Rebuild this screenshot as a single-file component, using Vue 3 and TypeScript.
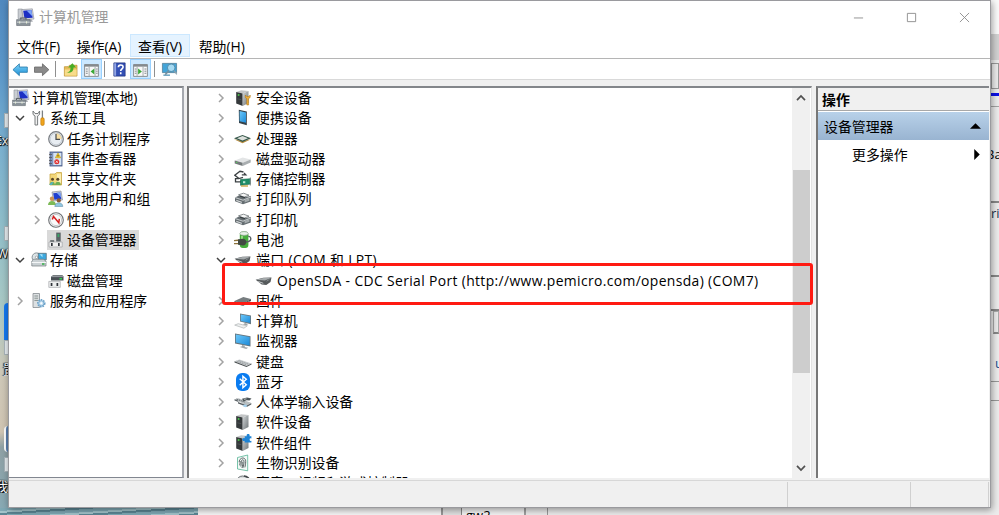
<template>
  <div class="desktop">
    <!-- 图标定义 -->
    <svg class="icon-defs" width="0" height="0" aria-hidden="true">
      <defs>
        <linearGradient id="g-screen" x1="0" y1="0" x2="1" y2="1">
          <stop offset="0" stop-color="#6cc8fa" />
          <stop offset="1" stop-color="#1c8ad8" />
        </linearGradient>
        <linearGradient id="g-metal" x1="0" y1="0" x2="1" y2="1">
          <stop offset="0" stop-color="#d0d4d6" />
          <stop offset="1" stop-color="#6f7578" />
        </linearGradient>
        <linearGradient id="g-arrow" x1="0" y1="0" x2="0" y2="1">
          <stop offset="0" stop-color="#7fd4f8" />
          <stop offset="1" stop-color="#1d8fd6" />
        </linearGradient>
      </defs>

      <symbol id="i-manage" viewBox="0 0 18 18">
        <path d="M2 1h4v9H2z" fill="#c9cdd2" stroke="#8a9097" stroke-width=".6" />
        <path d="M5.5 1.5 15.5.8 17 10.5 7 11z" fill="#d7d9de" stroke="#8b8f9a" stroke-width=".6" />
        <path d="M6.8 2.5 14.6 2 15.8 9.3 8 9.8z" fill="#1c2fc4" />
        <path d="M10 2.3 14.6 2l1 6z" fill="#7fa5f5" />
        <path d="M10 11h5l1 2h-6z" fill="#a8abb2" />
        <path d="M.6 11h12.8v5.6H.6z" fill="#8a9399" stroke="#666e74" stroke-width=".6" />
        <path d="M4.5 11V9.4h5V11" fill="none" stroke="#555d63" />
        <path d="M1 13.4h12" stroke="#d5dadd" />
        <path d="M3.5 12.6v2M10 12.6v2" stroke="#e9f0d8" />
      </symbol>
      <symbol id="i-tools" viewBox="0 0 18 18">
        <path d="M3 2v3.4l2 1.6V16h2.6V7l2-1.6V2L8 4.5H5z" fill="#f0f0f0" stroke="#6c7073" stroke-width=".9" />
        <path d="M12.4 1.5v8" stroke="#7b8084" stroke-width="1.3" />
        <rect x="10.8" y="8.8" width="3.4" height="7.6" rx="1.3" fill="#f0a51c" stroke="#b97408" stroke-width=".6" />
      </symbol>
      <symbol id="i-clock" viewBox="0 0 18 18">
        <circle cx="9" cy="9" r="7.3" fill="#e8edf2" stroke="#777b80" stroke-width="1.2" />
        <path d="M9 9V3a6 6 0 0 1 6 6z" fill="#f8dfa4" />
        <circle cx="9" cy="9" r="5.8" fill="none" stroke="#b2bac2" stroke-width=".6" />
        <path d="M9 4v5.3h4" fill="none" stroke="#45494d" stroke-width="1.2" />
      </symbol>
      <symbol id="i-event" viewBox="0 0 18 18">
        <rect x="3" y="2" width="12" height="14" fill="#7f95bf" stroke="#43547f" stroke-width=".8" />
        <rect x="6.3" y="3" width="8" height="12" fill="#d7e4f4" />
        <path d="M2 4.5h3M2 7.5h3M2 10.5h3M2 13.5h3" stroke="#555" stroke-width=".8" />
        <path d="m11 3 2.7 4.8H8.3z" fill="#ffd229" stroke="#b18b00" stroke-width=".5" />
        <path d="M11 4.8v1.8" stroke="#222" stroke-width=".8" />
        <circle cx="9.8" cy="11.8" r="2.5" fill="#de2f2f" />
        <path d="m8.7 10.7 2.2 2.2m0-2.2-2.2 2.2" stroke="#fff" stroke-width=".7" />
      </symbol>
      <symbol id="i-share" viewBox="0 0 18 18">
        <path d="M3 4h5l1.5-1.5h5V15H3z" fill="#f3d77a" stroke="#c39d34" stroke-width=".7" />
        <path d="M10 3.8h4v9h-4z" fill="#fbeeb3" />
        <circle cx="5.5" cy="9.2" r="1.5" fill="#5a4628" />
        <circle cx="10.8" cy="9.2" r="1.5" fill="#5a4628" />
        <path d="M2.5 15c0-4.5 5.5-4.5 5.5 0zM8 15c0-4.5 5.8-4.5 5.8 0z" fill="#6fae55" />
        <path d="M2.5 15c.4-2.5 3-3.3 4-2.9L4.8 15z" fill="#58b2c4" />
      </symbol>
      <symbol id="i-users" viewBox="0 0 18 18">
        <path d="M5 2 14 1l1.5 9-9 1z" fill="#cfd4dc" stroke="#7a7f90" stroke-width=".6" />
        <path d="m6.2 3.2 7-.8 1.1 6.6-7 .8z" fill="#1f3fd0" />
        <path d="m9.5 2.8 3.7-.4 1 5z" fill="#7fa8f5" />
        <circle cx="5" cy="8.8" r="2.2" fill="#c99355" />
        <path d="M1 15c0-5.2 8-5.2 8 0z" fill="#7dba57" />
        <circle cx="11.8" cy="10.4" r="2.1" fill="#8c5b34" />
        <path d="M7.8 16.5c0-5 8-5 8 0z" fill="#8fc6e0" stroke="#5684a0" stroke-width=".5" />
      </symbol>
      <symbol id="i-perf" viewBox="0 0 18 18">
        <circle cx="9" cy="9" r="7.3" fill="#fafafa" stroke="#6c6f72" stroke-width="1.1" />
        <circle cx="9" cy="9" r="5.6" fill="none" stroke="#b9bcc0" stroke-width=".8" />
        <path d="M5.3 8.5 6.5 5.5l5.3 6.3.5-4" fill="none" stroke="#d61f1f" stroke-width="1.5" />
      </symbol>
      <symbol id="i-device" viewBox="0 0 18 18">
        <path d="M9.2 1.6h4.5v9H9.2z" fill="#5b6266" />
        <path d="M10.5 3h1.8v3h-1.8z" fill="#39a567" />
        <path d="M3.2 9.2h4v2h-4z" fill="#5e6467" />
        <path d="M2 11h13.2v5H2z" fill="#f0f0f0" stroke="#a1a5a7" stroke-width=".7" />
        <path d="M4 12h1.7v3H4zM11 12h1.7v3H11z" fill="#30343a" />
      </symbol>
      <symbol id="i-storage" viewBox="0 0 18 18">
        <circle cx="6.5" cy="6.3" r="4.4" fill="#dce4e7" stroke="#879298" />
        <circle cx="6.5" cy="6.3" r="1.2" fill="#fff" stroke="#7f8588" stroke-width=".6" />
        <path d="M8.3 2.3h8v6.5h-8z" fill="#3da9df" stroke="#56656c" stroke-width=".7" />
        <path d="M9.5 3.3h3v3z" fill="#aee4f9" />
        <path d="m1.8 10 2-1.8h9.5L16 10v5H1.8z" fill="#c9d0d3" stroke="#737b80" stroke-width=".7" />
        <path d="M1.8 11.5H16" stroke="#f4f6f7" />
        <path d="M12 13h2.5" stroke="#28ad3b" stroke-width="1.4" />
      </symbol>
      <symbol id="i-diskmgmt" viewBox="0 0 18 18">
        <path d="m4 4.5 2-1.3h9.5l1 1.3v4H4z" fill="#495055" />
        <path d="M4 4.6h12.3" stroke="#9ba1a5" />
        <path d="M12.5 6.8H15" stroke="#32df50" stroke-width="1.4" />
        <path d="M1.8 9.4h11.5v6H1.8z" fill="#eceeee" stroke="#a7abad" stroke-width=".7" />
        <path d="M3.7 11h1.7v3H3.7zM9.5 11h1.7v3H9.5z" fill="#30343a" />
      </symbol>
      <symbol id="i-service" viewBox="0 0 18 18">
        <path d="M3 1.5h6.5v14H3z" fill="#dce0e2" stroke="#858c90" stroke-width=".8" />
        <path d="M4.4 4h3.7M4.4 6.2h3.7M4.4 8.4h3.7" stroke="#87918f" />
        <circle cx="11.3" cy="11.3" r="3.4" fill="#ddedf8" stroke="#6ca2c9" stroke-width="1.7" stroke-dasharray="1.6 .9" />
        <circle cx="11.3" cy="11.3" r="2.6" fill="#c6e0f1" stroke="#6ca2c9" stroke-width=".8" />
        <circle cx="11.3" cy="11.3" r="1" fill="#fff" />
      </symbol>

      <symbol id="i-tower" viewBox="0 0 18 18">
        <path d="m2.2 3 5-1.8L14.5 2 8.7 4.4z" fill="#c3c5c6" />
        <path d="m2.2 3 6.5 1.4V17l-6.5-2.5z" fill="#35393b" />
        <path d="M8.7 4.4 14.5 2v12l-5.8 3z" fill="url(#g-metal)" />
        <path d="m3.3 9.8 4 .9" stroke="#5a5f61" stroke-width=".6" />
        <path d="M3.8 6h1.6" stroke="#52e452" stroke-width="1.5" />
      </symbol>
      <symbol id="i-security" viewBox="0 0 18 18">
        <use href="#i-tower" />
        <path d="M11.3 6v2.4l1.5 1.3V16h1.8V9.7l1.6-1.3V6l-1.2 1.4h-2.3z" fill="#edae3b" stroke="#a96e0b" stroke-width=".5" />
      </symbol>
      <symbol id="i-portable" viewBox="0 0 18 18">
        <path d="m4.8.7 8 1.8v13.8L5 14z" fill="#36424a" />
        <path d="m5.6 2 6.4 1.4v10.3l-6.4-1.5z" fill="url(#g-screen)" />
      </symbol>
      <symbol id="i-cpu" viewBox="0 0 18 18">
        <path d="M0 9.3 8.5 13.3 17 9.3 8.5 11z" fill="#b68b3e" />
        <path d="M0 8.3 8.5 5 17 8.3 8.5 12z" fill="#37584b" />
        <path d="m3 8.2 5.5-2.2L14 8.2l-5.5 2.4z" fill="#dce0dc" />
      </symbol>
      <symbol id="i-drive" viewBox="0 0 18 18">
        <path d="m.7 10.4 8-3 8 2-8 3.4z" fill="#e3e5e6" />
        <path d="m.7 10.4 8 2.4V16l-8-2.6z" fill="#74797b" />
        <path d="m8.7 12.8 8-3.4v3L8.7 16z" fill="#a9aeb0" />
        <path d="M2 12.4h1.3" stroke="#57d65a" />
      </symbol>
      <symbol id="i-controller" viewBox="0 0 18 18">
        <path d="M9.5 2 6 1.3.8 5.2 5 8.6l4-1.2M7.8 4.8h4L10 3M5 8.6H1.5v3.2h6" fill="none" stroke="#3b4043" stroke-width="1.3" />
        <path d="M6.5 9.5 16.5 8.7v5.4l-10 1.2z" fill="#1e8e68" stroke="#0b6045" stroke-width=".6" />
        <path d="M9 11.2h2.3v2H9z" fill="#b9e4d4" />
        <path d="M7 16h7" stroke="#c7a13d" stroke-width="1.3" />
        <path d="M16.3 7.5v8" stroke="#888e90" />
      </symbol>
      <symbol id="i-printer" viewBox="0 0 18 18">
        <path d="m4.5 4.8 5-1.6 5.5 2-5 2z" fill="#f5f6f6" stroke="#5d6467" stroke-width=".7" />
        <path d="m1 7.5 4.6-2.3 4.8 2L16.8 6v5.5L9 14.3l-8-3z" fill="#656d71" />
        <path d="m1 7.6 8 2.6 7.8-3.3" fill="none" stroke="#c4c9cb" stroke-width="1.1" />
        <path d="m2.3 9.8 5.5 2v1.2l-5.5-2z" fill="#d5d8da" />
        <path d="m10.6 10 4.8-1.8v2.5l-4.8 1.8z" fill="#a5abad" />
        <path d="m6.2 6.3 4.7 1.3" stroke="#2f3639" />
      </symbol>
      <symbol id="i-battery" viewBox="0 0 18 18">
        <rect x="5.8" y=".6" width="8.6" height="16.4" rx="3" fill="#46ad3c" />
        <ellipse cx="10" cy="2.5" rx="4.2" ry="1.9" fill="#e8f2e8" stroke="#8d9a8d" stroke-width=".6" />
        <path d="M8 5v3" stroke="#a6e490" stroke-width="1.6" />
        <path d="M12 11c3.5-.2 5-1.5 4.8-3.5-.2-1.7-1.5-2.3-2.6-2" fill="none" stroke="#596064" stroke-width="1.4" />
        <path d="M4 8.3 9 7.7c2 0 3.3 1.5 3.3 3.3S11 14.6 9 14.6l-5-.8z" fill="#424a43" />
        <path d="m0 9.6 4-.3M0 12.6h4" stroke="#8d733b" stroke-width="1.4" />
      </symbol>
      <symbol id="i-port" viewBox="0 0 18 18">
        <path d="m.7 7.7 7.5-1.9 8.3-.3-1 4.5-4.2 3-4.6-.6z" fill="#55595b" />
        <path d="m.7 7.7 7.6-1.6 7.8-.2-6.2 2.6z" fill="#a4a9ab" />
        <path d="m3.3 9.5 5 1.8" stroke="#c5c9ca" />
        <path d="m11.5 9.2 3-1.8" stroke="#82898b" />
      </symbol>
      <symbol id="i-firmware" viewBox="0 0 18 18">
        <path d="m.5 9 8.8-4 7.6 2-8 5z" fill="#777d80" />
        <path d="m.5 9 8.4 3v2L.5 10.7zM8.9 12l8-5v2l-8 5z" fill="#3b4042" />
        <path d="m2 11 6.8 2.4L16 9" fill="none" stroke="#b6bbbd" stroke-width="1.4" stroke-dasharray="1 1" />
      </symbol>
      <symbol id="i-computer" viewBox="0 0 18 18">
        <path d="m6 1.5 11 2v8.8L6 9.6z" fill="#6b777d" />
        <path d="m6.8 2.5 9.4 1.8v6.8l-9.4-2z" fill="url(#g-screen)" />
        <path d="m11 11 2.5.8v1.7L9 12.4z" fill="#9fa6a9" />
        <path d="m.7 13.1 3.5-1.4 9 2.2-3.3 2.3z" fill="#eef0f0" stroke="#a3a8aa" stroke-width=".6" />
      </symbol>
      <symbol id="i-monitor" viewBox="0 0 18 18">
        <path d="m1 1.4 15.5 2.8v10.4L1 11.4z" fill="#64737b" />
        <path d="m1.8 2.4 13.9 2.5v8.5L1.8 10.5z" fill="url(#g-screen)" />
        <path d="m8 13 2.8.6v1.3l3.4.8-2 1.2-6.5-1.8 2.3-.8z" fill="#a1a9ac" />
      </symbol>
      <symbol id="i-keyboard" viewBox="0 0 18 18">
        <path d="m.5 8.3 5-1.8 12 4-5 2.5z" fill="#c7cbcd" />
        <path d="m.5 8.3 12 4.7v1L.5 9.5zM12.5 13l5-2.5v1l-5 2.5z" fill="#4c5153" />
        <path d="m2.6 8.2 9.8 3.8M4.6 7.5l9.8 3.7" stroke="#8b9193" stroke-width=".8" stroke-dasharray="1.2 .6" />
      </symbol>
      <symbol id="i-bluetooth" viewBox="0 0 18 18">
        <rect x="2" y="0" width="14" height="18" rx="6" fill="#0a7cf0" />
        <path d="m5.7 5.7 6.6 6-3.4 3V3.3l3.4 3-6.6 6" fill="none" stroke="#fff" stroke-width="1.4" />
      </symbol>
      <symbol id="i-hid" viewBox="0 0 18 18">
        <path d="m.5 6.2 4-1 12.5 4.6-4.3 2.6z" fill="#b9bfc1" />
        <path d="m.5 6.2 3.5 1.2.5 1.6-4-1.5zM4 9l8.7 3.2v1.6L4 10.4zM12.7 12.4l4.6-2.4v1.6l-4.6 2.3z" fill="#596064" />
        <path d="m2.5 6 8 3" stroke="#596064" stroke-dasharray="1.5 1" />
        <path d="m8 5.8 5-1.2 4.5 1-2 2-2.8-.4-3.2 1.3z" fill="#4c5558" />
        <path d="m10 6.3 2.5-.5" stroke="#bcc1c3" />
        <path d="M8.5 12.8c1.8-2 4.5-1.6 4.5.3 0 1.3-3 1.6-4.5-.3" fill="#a7d1ec" />
      </symbol>
      <symbol id="i-component" viewBox="0 0 18 18">
        <use href="#i-tower" />
        <path d="M10.7 2.2h2.2a1.5 1.5 0 1 1 2.5 0h2v2.2a1.3 1.3 0 1 0 0 2.4v1.6h-6.7V6.7a1.5 1.5 0 1 1 0-2.4z" fill="#1e83d5" />
      </symbol>
      <symbol id="i-finger" viewBox="0 0 18 18">
        <path d="M3.5 3.5 13.7 1v15.8L3.5 15z" fill="#f3faf7" stroke="#57b496" stroke-width=".8" />
        <path d="M5.2 8.2c0-5 6.5-5.8 6.5-.8 0 2.7-.5 4.3-.8 6M6.8 12.5c1-4.7 0-6.7 2-6.7 2 0 1 4.4.4 7.8M5.6 11.3c.6-1.6.5-3.5.7-4.3M8.8 7.7c0 2 0 3.7-.8 6.3" fill="none" stroke="#4b5355" stroke-width=".9" />
      </symbol>
      <symbol id="i-sound" viewBox="0 0 18 18">
        <circle cx="8.5" cy="8" r="6" fill="#d8dbdc" stroke="#6a7073" />
        <path d="M10 2a6 6 0 0 1 0 12" fill="none" stroke="#3f4446" stroke-width="1.5" />
      </symbol>

      <symbol id="i-back" viewBox="0 0 18 18">
        <path d="M1 9.2 7.8 3v3.4h8.4V12H7.8v3.5z" fill="url(#g-arrow)" stroke="#2b7dae" stroke-width=".9" />
      </symbol>
      <symbol id="i-forward" viewBox="0 0 18 18">
        <path d="m16.8 9.2-6.8-6.2v3.4H1.6V12H10v3.5z" fill="#8a8a8a" stroke="#6a6a6a" stroke-width=".9" />
      </symbol>
      <symbol id="i-folderup" viewBox="0 0 18 18">
        <path d="M2.5 6h4l1.4-1.5h8V16H2.5z" fill="#e7bd59" stroke="#b88a28" stroke-width=".7" />
        <path d="M3 9h12.5v6.5H3z" fill="#f8dc8a" />
        <path d="M4.5 12c4 0 4.5-2 4.5-5H6.5l4.5-4.5L15 7h-2.8c0 4.5-2.5 6.2-7.7 5" fill="#48ac25" />
      </symbol>
      <symbol id="i-paneleft" viewBox="0 0 18 18">
        <path d="M1.7 3.7h14.6v12.6H1.7z" fill="#f8f8f8" stroke="#858a8e" />
        <path d="M1.5 5h15" stroke="#858a8e" stroke-width="2" />
        <path d="M6.5 6v10M12.8 6v10" stroke="#a3a8ac" />
        <path d="M3 8.5h2M3 10.8h2M3 13h2M13.8 8.5h1.7M13.8 10.8h1.7M13.8 13h1.7" stroke="#7d858a" />
        <path d="m12 8v6.4l-4-3.2z" fill="#39a936" />
      </symbol>
      <symbol id="i-paneright" viewBox="0 0 18 18">
        <path d="M1.7 3.7h14.6v12.6H1.7z" fill="#f8f8f8" stroke="#858a8e" />
        <path d="M1.5 5h15" stroke="#858a8e" stroke-width="2" />
        <path d="M5.4 6v10M11.7 6v10" stroke="#a3a8ac" />
        <path d="M3 8.5h1.7M3 10.8h1.7M3 13h1.7M13.2 8.5h2M13.2 10.8h2M13.2 13h2" stroke="#7d858a" />
        <path d="M6.5 8v6.4l4-3.2z" fill="#39a936" />
      </symbol>
      <symbol id="i-help" viewBox="0 0 18 18">
        <path d="M3 2h12v14H3z" fill="#3450b5" stroke="#1d2d78" stroke-width=".7" />
        <path d="M3.4 2.4h2v13.2h-2z" fill="#94a7e3" />
        <path d="M7.8 6.7c0-3.3 5-3.3 5-.3 0 2-2.5 2-2.5 4.3M10.3 12v1.9" fill="none" stroke="#fff" stroke-width="1.7" />
      </symbol>
      <symbol id="i-scan" viewBox="0 0 18 18">
        <path d="M1.5 2.5h15v9.8h-15z" fill="#43a4d8" stroke="#477188" stroke-width=".7" />
        <path d="M2.5 14.3h7v1.4h-7z" fill="#5998b9" />
        <circle cx="10.8" cy="7.2" r="4" fill="#a5daf3" stroke="#477e9b" stroke-width=".8" />
        <path d="m8 10.2-3.5 4.3" stroke="#7390a0" stroke-width="1.7" />
        <path d="m13.8 10.2 3 4" stroke="#8da3ae" stroke-width="1.2" />
      </symbol>
    </svg>

    <!-- 桌面左侧 -->
    <div class="wallpaper-left">
      <span class="shortcut s1"></span>
      <span class="shortcut-label">Ex</span>
      <span class="shortcut s2"></span>
      <span class="shortcut-label">W</span>
      <span class="shortcut-blue"></span>
      <span class="shortcut s3"></span>
      <span class="shortcut-label cn first">置</span>
      <span class="shortcut-disc"></span>
      <span class="shortcut s4"></span>
      <span class="shortcut-label cn">我</span>
    </div>

    <!-- 主窗口 -->
    <div class="window">
      <header class="title-bar">
        <svg class="title-icon"><use href="#i-manage" /></svg>
        <span class="title-text">计算机管理</span>
        <div class="window-buttons">
          <svg v-for="(d, i) in windowButtons" :key="i" viewBox="0 0 12 12"><path :d="d" /></svg>
        </div>
      </header>

      <nav class="menu-bar">
        <span v-for="menu in menus" :key="menu" class="menu-item" :class="{ hover: menu === activeMenu }">{{ menu }}</span>
      </nav>

      <div class="tool-bar">
        <template v-for="(tool, i) in tools" :key="i">
          <span v-if="tool === '|'" class="tool-sep"></span>
          <span v-else class="tool" :class="{ pressed: tool.startsWith('pane') }">
            <svg><use :href="'#i-' + tool" /></svg>
          </span>
        </template>
      </div>

      <main class="panes">
        <section class="pane console-tree">
          <div
            v-for="node in consoleTree"
            :key="node.label"
            class="row"
            :class="['level-' + node.level, { selected: node.label === selectedNode }]"
          >
            <svg class="chevron" :class="{ open: node.open }" viewBox="0 0 10 10">
              <path v-if="node.open !== undefined" :d="node.open ? chevronDown : chevronRight" />
            </svg>
            <span class="row-body">
              <svg class="row-icon"><use :href="'#i-' + node.icon" /></svg>
              <span>{{ node.label }}</span>
            </span>
          </div>
        </section>

        <section class="pane device-pane">
          <div class="device-tree">
            <div v-for="node in deviceTree" :key="node.label" class="row" :class="'level-' + node.level">
              <svg class="chevron" :class="{ open: node.open }" viewBox="0 0 10 10">
                <path v-if="node.open !== undefined" :d="node.open ? chevronDown : chevronRight" />
              </svg>
              <span class="row-body">
                <svg class="row-icon"><use :href="'#i-' + node.icon" /></svg>
                <span :class="{ latin: node.icon === 'port' }">{{ node.label }}</span>
              </span>
            </div>
          </div>
          <div class="scroll-bar">
            <svg viewBox="0 0 10 10"><path d="M1 7.2 5 3l4 4.2" /></svg>
            <div class="scroll-thumb"></div>
            <svg viewBox="0 0 10 10"><path d="M1 2.8 5 7l4-4.2" /></svg>
          </div>
        </section>

        <section class="pane action-pane">
          <div class="action-title">操作</div>
          <div class="action-group">
            <span>设备管理器</span>
            <svg viewBox="0 0 12 6"><path d="M0 6 6 0l6 6z" /></svg>
          </div>
          <div class="action-item">
            <span>更多操作</span>
            <svg viewBox="0 0 6 12"><path d="m0 0 6 6-6 6z" /></svg>
          </div>
        </section>
      </main>

      <footer class="status-bar">
        <span class="status-cell main"></span>
        <span class="status-cell mid"></span>
        <span class="status-cell end"></span>
      </footer>

      <!-- 红色标注框 -->
      <div class="highlight-box"></div>
    </div>

    <!-- 后面的窗口 -->
    <div class="behind-right">
      <div class="strip top"></div>
      <div class="strip grey"></div>
      <div class="strip combo"></div>
      <div class="strip blue"></div>
      <div class="strip text-ba">Ba</div>
      <div class="strip text-ri">ri</div>
      <div class="strip box"></div>
      <div class="strip field"></div>
      <div class="strip text-u">u</div>
      <div class="strip rest"></div>
    </div>
    <div class="behind-bottom">
      <div class="water"></div>
      <div class="sheet"></div>
      <div class="gutter"></div>
      <div class="tab">gw2</div>
      <div class="sheet-grey"></div>
    </div>
  </div>
</template>

<script setup lang="ts">
import { ref } from 'vue';

interface TreeNode {
  label: string;
  icon: string;
  level: number;
  open?: boolean;
}

const menus = ['文件(F)', '操作(A)', '查看(V)', '帮助(H)'];
const activeMenu = ref('查看(V)');
const selectedNode = ref('设备管理器');

const tools = ['back', 'forward', '|', 'folderup', 'paneleft', '|', 'help', 'paneright', '|', 'scan'];

// 最小化、最大化、关闭
const windowButtons = ['M1 6.5h10', 'M1.5 1.5h9v9h-9z', 'm1 1 10 10M11 1 1 11'];

const chevronRight = 'm3 1 4 4-4 4';
const chevronDown = 'm1 3 4 4 4-4';

const consoleTree: TreeNode[] = [
  { label: '计算机管理(本地)', icon: 'manage', level: 0 },
  { label: '系统工具', icon: 'tools', level: 1, open: true },
  { label: '任务计划程序', icon: 'clock', level: 2, open: false },
  { label: '事件查看器', icon: 'event', level: 2, open: false },
  { label: '共享文件夹', icon: 'share', level: 2, open: false },
  { label: '本地用户和组', icon: 'users', level: 2, open: false },
  { label: '性能', icon: 'perf', level: 2, open: false },
  { label: '设备管理器', icon: 'device', level: 2 },
  { label: '存储', icon: 'storage', level: 1, open: true },
  { label: '磁盘管理', icon: 'diskmgmt', level: 2 },
  { label: '服务和应用程序', icon: 'service', level: 1, open: false }
];

const deviceTree: TreeNode[] = [
  { label: '安全设备', icon: 'security', level: 1, open: false },
  { label: '便携设备', icon: 'portable', level: 1, open: false },
  { label: '处理器', icon: 'cpu', level: 1, open: false },
  { label: '磁盘驱动器', icon: 'drive', level: 1, open: false },
  { label: '存储控制器', icon: 'controller', level: 1, open: false },
  { label: '打印队列', icon: 'printer', level: 1, open: false },
  { label: '打印机', icon: 'printer', level: 1, open: false },
  { label: '电池', icon: 'battery', level: 1, open: false },
  { label: '端口 (COM 和 LPT)', icon: 'port', level: 1, open: true },
  { label: 'OpenSDA - CDC Serial Port (http://www.pemicro.com/opensda) (COM7)', icon: 'port', level: 2 },
  { label: '固件', icon: 'firmware', level: 1, open: false },
  { label: '计算机', icon: 'computer', level: 1, open: false },
  { label: '监视器', icon: 'monitor', level: 1, open: false },
  { label: '键盘', icon: 'keyboard', level: 1, open: false },
  { label: '蓝牙', icon: 'bluetooth', level: 1, open: false },
  { label: '人体学输入设备', icon: 'hid', level: 1, open: false },
  { label: '软件设备', icon: 'tower', level: 1, open: false },
  { label: '软件组件', icon: 'component', level: 1, open: false },
  { label: '生物识别设备', icon: 'finger', level: 1, open: false },
  { label: '声音、视频和游戏控制器', icon: 'sound', level: 1, open: false }
];
</script>

<style>
body {
  margin: 0;
  overflow: hidden;
}
</style>

<style scoped>
.desktop {
  display: grid;
  grid-template-columns: 8px 983px 8px;
  grid-template-rows: 508px 7px;
  width: 999px;
  height: 515px;
  overflow: hidden;
  font-family: "Open Sans", "Noto Sans CJK SC", sans-serif;
  font-size: 13.9px;
  color: #000;
}

.desktop * {
  box-sizing: border-box;
}

.icon-defs {
  position: absolute;
}

/* 桌面左侧 */
.wallpaper-left {
  display: flex;
  flex-direction: column;
  align-items: flex-end;
  overflow: hidden;
  background: linear-gradient(to bottom,
    #5189bf 0%,
    #5b97c9 14%,
    #79afcf 28%,
    #8dbcc9 43%,
    #a8c8c4 60%,
    #cdc8b8 73%,
    #cfc4b2 85%,
    #8fa0a4 88%,
    #88a9b4 100%
  );
}

.shortcut {
  flex: none;
  width: 4px;
  height: 15px;
  background: #e6ecef;
  border: 1px solid #a9b4ba;
  border-right: none;
}

.shortcut.s1 {
  margin-top: 113px;
}

.shortcut.s2 {
  margin-top: 78px;
}

.shortcut.s4 {
  margin-top: 5px;
}

.shortcut-label {
  display: flex;
  justify-content: flex-end;
  width: 8px;
  height: 14px;
  margin-top: 6px;
  overflow: hidden;
  font-size: 12px;
  line-height: 14px;
  color: #fff;
  text-shadow: 0 0 2px #000, 1px 1px 1px #000, -1px 0 1px #000;
}

.shortcut-label.cn {
  margin-top: 7px;
  font-size: 13px;
}

.shortcut-label.first {
  justify-content: flex-start;
  padding-left: 3px;
}

.shortcut-blue {
  flex: none;
  width: 4px;
  height: 37px;
  margin-top: 42px;
  background: #1478f0;
  border-top-left-radius: 4px;
}

.shortcut-disc {
  flex: none;
  width: 4px;
  height: 26px;
  margin-top: 50px;
  background: #5a7fae;
  border-left: 2px solid #fff;
  border-radius: 4px 0 0 4px;
}

/* 主窗口 */
.window {
  position: relative;
  z-index: 2;
  display: flex;
  flex-direction: column;
  background: #fff;
  border: 1px solid #9a9a9e;
  box-shadow: 1px 2px 7px rgba(0, 0, 0, 0.4);
}

.title-bar {
  display: flex;
  align-items: center;
  flex: none;
  height: 32px;
  padding-left: 7px;
}

.title-icon {
  width: 19px;
  height: 19px;
}

.title-text {
  flex: 1;
  padding-left: 4px;
  line-height: 20px;
  color: #999;
}

.window-buttons {
  display: flex;
  gap: 42px;
  padding-right: 20px;
}

.window-buttons svg {
  width: 11px;
  height: 11px;
  fill: none;
  stroke: #8d8d8d;
  stroke-width: 1;
}

.menu-bar {
  display: flex;
  flex: none;
  gap: 0.5px;
  height: 26px;
  padding: 1px 0 2px;
  border-bottom: 1px solid #b5b5b5;
}

.menu-item {
  height: 23px;
  padding: 0 7px;
  border: 1px solid transparent;
  line-height: 23px;
}

.menu-item.hover {
  background: #e5f3ff;
  border-color: #cce8ff;
}

.tool-bar {
  display: flex;
  align-items: center;
  flex: none;
  height: 21px;
  padding-left: 1px;
  border-bottom: 1px solid #d9d9d9;
}

.tool {
  display: flex;
  align-items: center;
  justify-content: center;
  width: 21px;
  height: 20px;
  border: 1px solid transparent;
}

.tool.pressed {
  background: #cce8ff;
  border-color: #99d1ff;
}

.tool svg {
  width: 17px;
  height: 17px;
  flex: none;
}

.tool-sep {
  width: 1px;
  height: 16px;
  margin: 0 4px 0 2.5px;
  background: #8f8f8f;
}

/* 三栏 */
.panes {
  display: flex;
  flex: none;
  height: 400px;
  padding: 6px 1px 2px 0;
  background: #f0f0f0;
}

.pane {
  overflow: hidden;
  background: #fff;
  border-top: 2px solid #83868a;
}

.console-tree {
  width: 175px;
  border-right: 2px solid #a5a8ae;
  border-bottom: 1px solid #828790;
}

.device-pane {
  display: flex;
  width: 625px;
  margin-left: 3px;
  padding-right: 1px;
  border-left: 2px solid #777;
  border-right: 1px solid #e3e3e3;
}

.action-pane {
  flex: 1;
  margin-left: 4px;
  border-left: 2px solid #777;
}

/* 树节点 */
.row {
  display: flex;
  align-items: center;
  height: 20.28px;
  line-height: 20px;
  white-space: nowrap;
}

.row-body {
  display: flex;
  align-items: center;
  gap: 2px;
  padding-right: 3px;
}

.row-icon {
  width: 18px;
  height: 18px;
  flex: none;
}

.latin {
  letter-spacing: 0.36px;
}

.chevron {
  width: 10px;
  height: 10px;
  flex: none;
  margin-right: 5px;
  fill: none;
  stroke: #a3a3a3;
  stroke-width: 1.5;
}

.chevron.open {
  stroke: #404040;
}

.console-tree .level-0 {
  padding-left: 3px;
}

.console-tree .level-0 .chevron {
  display: none;
}

.console-tree .level-1 {
  padding-left: 6px;
}

.console-tree .level-2 {
  padding-left: 23px;
}

.selected .row-body {
  background: #d9d9d9;
}

.device-tree {
  flex: 1;
  min-width: 0;
}

.device-tree .level-1 {
  padding-left: 27px;
}

.device-tree .level-1 .row-body {
  gap: 4px;
}

.device-tree .chevron {
  margin-right: 8px;
}

.device-tree .level-2 {
  padding-left: 48px;
}

.device-tree .level-2 .row-body {
  gap: 4px;
}

/* 滚动条 */
.scroll-bar {
  display: flex;
  flex-direction: column;
  align-items: center;
  width: 18px;
  background: #f0f0f0;
}

.scroll-bar svg {
  width: 10px;
  height: 10px;
  margin: 5px 0;
  fill: none;
  stroke: #505050;
  stroke-width: 1.7;
}

.scroll-thumb {
  width: 17px;
  height: 203px;
  margin-top: 62px;
  margin-bottom: auto;
  background: #cdcdcd;
}

/* 操作栏 */
.action-title {
  height: 23px;
  padding-left: 4px;
  background: #f0f0f0;
  border-bottom: 1px solid #a8a8a8;
  font-weight: 700;
  line-height: 24px;
}

.action-group {
  display: flex;
  align-items: center;
  justify-content: space-between;
  height: 28px;
  margin-top: 1px;
  padding: 0 8px 0 6px;
  background: linear-gradient(to bottom, #b8d1e9, #99b4d1);
}

.action-group svg {
  width: 11px;
  height: 6px;
}

.action-item {
  display: flex;
  align-items: center;
  justify-content: space-between;
  height: 28px;
  padding: 0 9px 0 34px;
}

.action-item svg {
  width: 6px;
  height: 11px;
}

/* 状态栏 */
.status-bar {
  display: flex;
  flex: 1;
  padding-right: 1px;
  background: #f0f0f0;
  border-top: 1px solid #d7d7d7;
}

.status-cell {
  margin-top: 1px;
  border-right: 1px solid #d0d0d0;
}

.status-cell.main {
  width: 779px;
}

.status-cell.mid {
  width: 123px;
}

.status-cell.end {
  flex: 1;
}

/* 标注框 */
.highlight-box {
  position: absolute;
  left: 213px;
  top: 262px;
  width: 591px;
  height: 42px;
  border: 3px solid #ff1a12;
  border-radius: 3px;
}

/* 后面的窗口 */
.behind-right {
  overflow: hidden;
  background: #ececec;
}

.strip {
  overflow: hidden;
  white-space: nowrap;
  font-size: 13px;
}

.strip.top {
  height: 34px;
  background: #fafafa;
}

.strip.grey {
  height: 26px;
  background: #d2d2d2;
}

.strip.combo {
  height: 26px;
  margin-top: 3px;
  border: 1px solid #999;
}

.strip.blue {
  height: 14px;
  margin-top: 4px;
  border-top: 3px solid #0d10e8;
  border-bottom: 1px solid #a3a3a3;
}

.strip.text-ba {
  height: 96px;
  padding-top: 38px;
  border-bottom: 2px solid #888;
  text-indent: -5px;
}

.strip.text-ri {
  height: 74px;
  border-bottom: 2px solid #888;
  line-height: 21px;
  color: #23324e;
}

.strip.box {
  height: 34px;
  border-bottom: 2px solid #888;
}

.strip.field {
  height: 23px;
  margin-left: 2px;
  border: 1px solid #aaa;
  border-bottom: 2px solid #888;
}

.strip.text-u {
  height: 48px;
  padding-left: 4px;
  border-bottom: 1px solid #999;
  line-height: 58px;
  color: #1b4f8d;
}

.strip.rest {
  height: 19px;
  border-bottom: 1px solid #999;
}

.behind-bottom {
  display: flex;
  grid-column: 1 / 4;
  overflow: hidden;
  background: #ececec;
}

.water {
  width: 198px;
  background: repeating-linear-gradient(176deg, #7fa9b5 0 3px, #a2c4cb 3px 5px, #5c8795 5px 7px);
}

.sheet {
  width: 243px;
  background: #f7f7f7;
}

.gutter {
  width: 21px;
  background: #e2e2e2;
  border-left: 2px solid #999;
  border-right: 1px solid #888;
}

.tab {
  width: 64px;
  padding-left: 4px;
  background: #f5f5f5;
  border-right: 2px solid #a0a0a0;
  font-size: 13px;
  line-height: 14px;
}

.sheet-grey {
  width: 22px;
  border-right: 1px solid #999;
}
</style>
